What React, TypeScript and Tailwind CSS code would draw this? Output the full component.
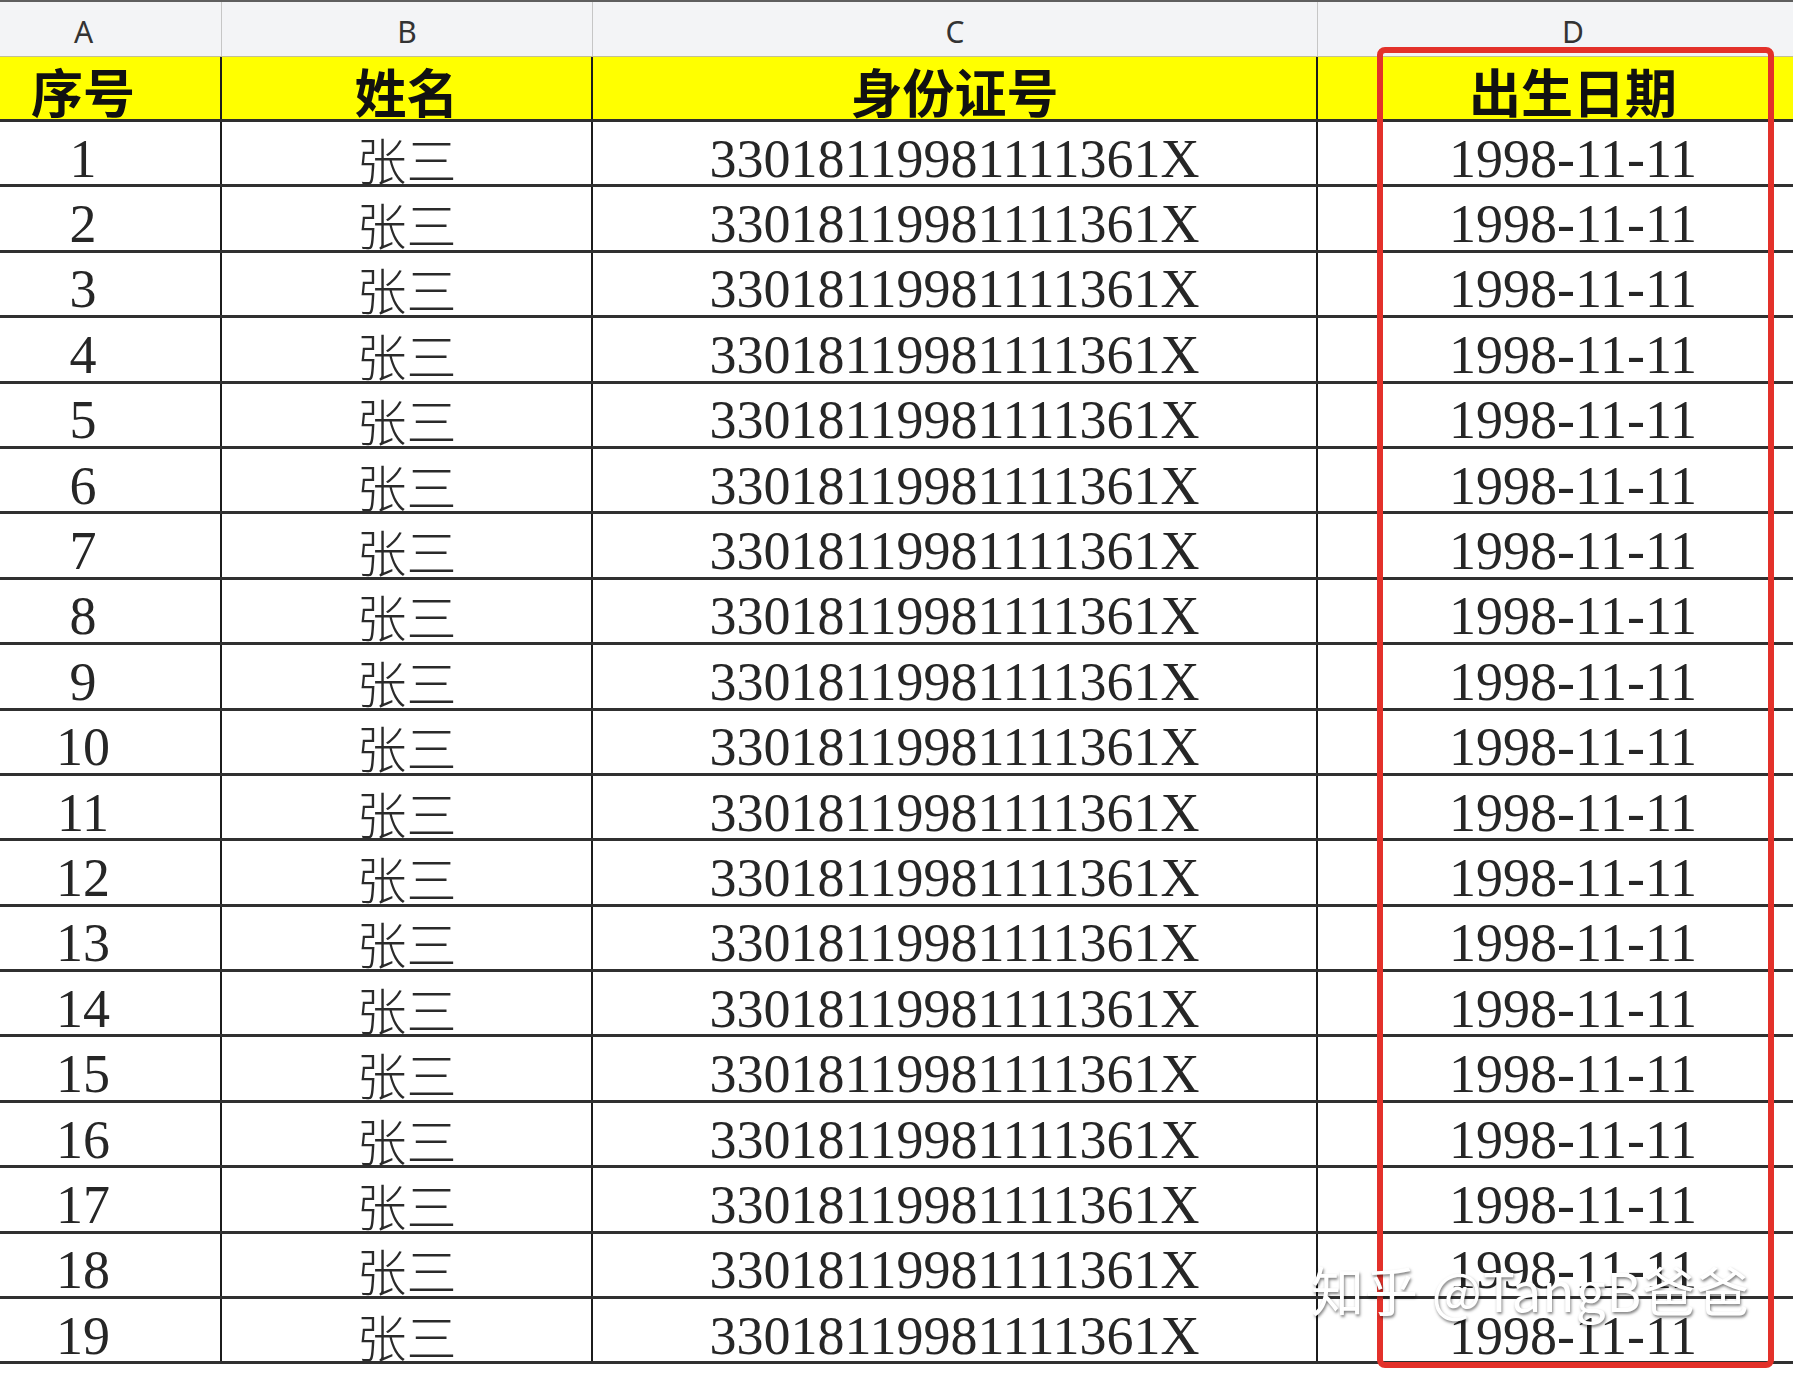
const columns = [
  { key: 'A', width: 'w-[222px] pr-[54px]', title: '序号' },
  { key: 'B', width: 'w-[371px]', title: '姓名' },
  { key: 'C', width: 'w-[725px]', title: '身份证号' },
  { key: 'D', width: 'w-[510px]', title: '出生日期' },
];

const rows = Array.from({ length: 19 }, (_, i) => ({
  no: String(i + 1),
  name: '张三',
  id: '33018119981111361X',
  birth: '1998-11-11',
}));

const cellFont = "font-['Liberation_Serif','Noto_Sans_CJK_SC',serif]";

export default function App() {
  return (
    <div className="relative w-[1793px] h-[1375px] overflow-hidden bg-white">
      {/* toolbar remnant */}
      <div className="h-[2px] bg-[#5f5f5f]" />

      {/* column letters */}
      <div className="flex h-[55px] bg-[#f3f4f6] border-b border-[#c2bf94] font-['Noto_Sans','Noto_Sans_CJK_SC',sans-serif] text-[30px] text-[#333]">
        {columns.map((c, i) => (
          <div
            key={c.key}
            className={`${c.width} shrink-0 flex items-center justify-center pt-[4px] ${
              i < 3 ? 'border-r border-[#c6c6c6]' : ''
            }`}
          >
            {c.key}
          </div>
        ))}
      </div>

      {/* title row */}
      <div className={`flex h-[65px] bg-[#ffff00] border-b-[3px] border-[#2e2e2e] ${cellFont}`}>
        {columns.map((c, i) => (
          <div
            key={c.key}
            className={`${c.width} shrink-0 flex items-center justify-center pt-[16px] text-[52px] font-bold text-[#111] ${
              i < 3 ? 'border-r-2 border-[#1c1c1c]' : ''
            }`}
          >
            {c.title}
          </div>
        ))}
      </div>

      {/* data rows */}
      {rows.map((r) => (
        <div
          key={r.no}
          className={`flex h-[65.4px] border-b-[3px] border-[#303030] text-[#262626] ${cellFont}`}
        >
          <div className="w-[222px] pr-[54px] shrink-0 flex items-center justify-center pt-[12px] text-[54px] border-r-2 border-[#1c1c1c]">
            {r.no}
          </div>
          <div className="w-[371px] shrink-0 flex items-center justify-center pt-[10px] text-[50px] font-light font-['Noto_Sans_CJK_SC',serif] text-[#2a2a2a] border-r-2 border-[#1c1c1c]">
            {r.name}
          </div>
          <div className="w-[725px] shrink-0 flex items-center justify-center pt-[12px] text-[54px] border-r-2 border-[#1c1c1c]">
            {r.id}
          </div>
          <div className="w-[510px] shrink-0 flex items-center justify-center pt-[12px] text-[54px]">
            {r.birth}
          </div>
        </div>
      ))}

      {/* highlight box around column D */}
      <div className="absolute left-[1377px] top-[47px] w-[397px] h-[1321px] border-[6px] border-[#e3312a] rounded-[8px]" />

      {/* watermark */}
      <div className="absolute left-[1311px] top-[1250px] whitespace-nowrap font-['Noto_Sans_CJK_SC',sans-serif] text-[53px] tracking-[1px] text-white [text-shadow:1px_2px_3px_rgba(0,0,0,0.5)]">
        知乎 @TangB爸爸
      </div>
    </div>
  );
}
